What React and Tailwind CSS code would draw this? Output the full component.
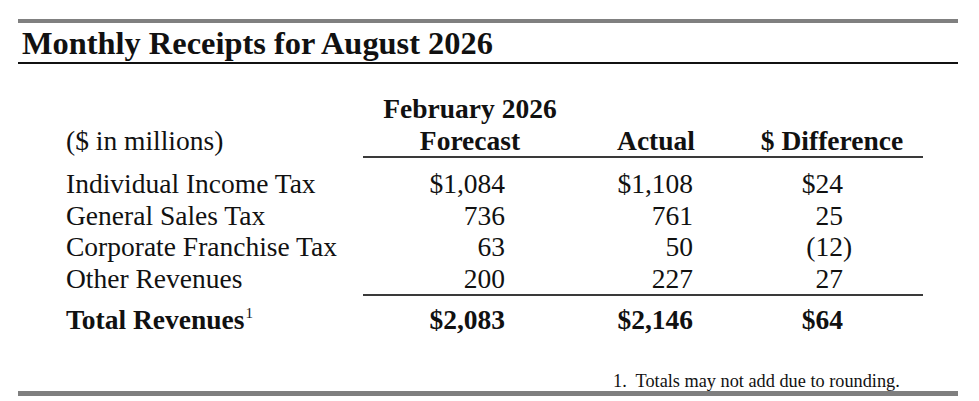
export default function App() {
  const rows = [
    ["Individual Income Tax", "$1,084", "$1,108", "$24"],
    ["General Sales Tax", "736", "761", "25"],
    ["Corporate Franchise Tax", "63", "50", "(12)"],
    ["Other Revenues", "200", "227", "27"],
  ];
  const grid = "grid grid-cols-[345px_214px_164px_182px]";
  return (
    <div className="w-[979px] h-[401px] bg-white text-[#111] overflow-hidden" style={{ fontFamily: '"Liberation Serif", "Times New Roman", serif' }}>
      <div className="ml-[18px] mt-[19px] w-[940px] border-t-4 border-[#808080]">
        <div className="mt-[4px] pl-[4px] pb-[3px] border-b-2 border-[#111] text-[32.4px] leading-[32px] font-bold">
          Monthly Receipts for August 2026
        </div>
        <div className="mt-[29px] text-[27.5px]">
          <div className={`${grid} leading-[32px]`}>
            <div />
            <div className="text-center font-bold">February 2026</div>
            <div />
            <div />
          </div>
          <div className={`${grid} leading-[31px]`}>
            <div className="pl-[48px]">($ in millions)</div>
            <div className="text-center font-bold border-b-2 border-[#3a3a3a]">Forecast</div>
            <div className="text-center font-bold border-b-2 border-[#3a3a3a] pr-[6px]">Actual</div>
            <div className="text-center font-bold border-b-2 border-[#3a3a3a]">$ Difference</div>
          </div>
          <div className="mt-[10px] leading-[31.5px]">
            {rows.map((r, i) => (
              <div key={i} className={grid}>
                <div className="pl-[48px] whitespace-nowrap">{r[0]}</div>
                <div className="text-right pr-[72px]">{r[1]}</div>
                <div className="text-right pr-[48px]">{r[2]}</div>
                <div className="text-right pr-[80px]">
                  {r[3].endsWith(")") ? (
                    <>
                      {r[3].slice(0, -1)}
                      <span className="inline-block w-0">)</span>
                    </>
                  ) : (
                    r[3]
                  )}
                </div>
              </div>
            ))}
          </div>
          <div className={grid}>
            <div />
            <div className="col-span-3 border-t-2 border-[#3a3a3a]" />
          </div>
          <div className={`${grid} mt-[8px] leading-[32px] font-bold`}>
            <div className="pl-[48px] whitespace-nowrap">
              Total Revenues<span className="relative top-[-11px] text-[15px] font-normal ml-[1px]">1</span>
            </div>
            <div className="text-right pr-[72px]">$2,083</div>
            <div className="text-right pr-[48px]">$2,146</div>
            <div className="text-right pr-[80px]">$64</div>
          </div>
        </div>
        <div className="mt-[31px] pl-[595px] text-[18.3px] leading-[20px] whitespace-pre">1.  Totals may not add due to rounding.</div>
        <div className="border-t-[5px] border-[#7f7f7f]" />
      </div>
    </div>
  );
}
